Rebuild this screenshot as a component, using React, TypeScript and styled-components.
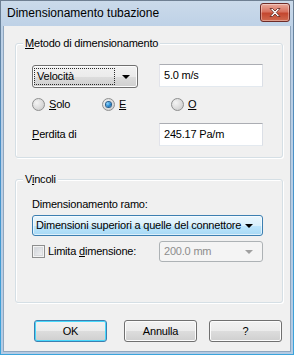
import React from 'react';
import styled, { createGlobalStyle } from 'styled-components';

const GlobalStyle = createGlobalStyle`
  html, body {
    margin: 0;
    padding: 0;
    background: #ffffff;
  }
  body {
    font-family: "Liberation Sans", Arial, sans-serif;
    font-size: 11px;
    line-height: 13px;
    color: #000;
  }
`;

const Frame = styled.div`
  width: 294px;
  height: 355px;
  box-sizing: border-box;
  border: 1px solid;
  border-image: linear-gradient(#6f7f92, #4a8fc6 40%, #3aa4dc) 1;
  background: linear-gradient(#cbdaea, #bcd0e6 30px, #b4cbe4);
  padding: 0 2px 2px 2px;
  display: flex;
  flex-direction: column;
`;

const TitleBar = styled.div`
  height: 25px;
  flex: none;
  display: flex;
  align-items: flex-start;
  padding-left: 4px;
  padding-right: 1px;
`;

const TitleText = styled.div`
  flex: 1;
  font-size: 12px;
  line-height: 25px;
`;

const CloseButton = styled.div`
  margin-top: 2px;
  width: 30px;
  height: 19px;
  box-sizing: border-box;
  border: 1px solid #6e2b27;
  border-radius: 3px;
  background: linear-gradient(#e9a99b, #d8725f 45%, #c4472f 55%, #d06a4f);
  box-shadow: inset 0 0 0 1px rgba(255, 255, 255, 0.35);
  display: flex;
  align-items: center;
  justify-content: center;
`;

const Client = styled.div`
  flex: 1;
  background: #f0f0f0;
  border: 1px solid #8fa6be;
  border-top: none;
  padding-top: 17px;
  padding-left: 11px;
`;

const Group = styled.div<{ gapTop?: number; padBottom: number }>`
  width: 268px;
  box-sizing: border-box;
  margin-top: ${p => p.gapTop ?? 0}px;
  border: 1px solid #d5dfe5;
  border-radius: 3px;
  box-shadow: inset 1px 1px 0 #ffffff, 1px 1px 0 #ffffff;
  padding: 0 19px ${p => p.padBottom}px 16px;
  display: flex;
  flex-direction: column;
`;

const Legend = styled.div`
  align-self: flex-start;
  margin-top: -7px;
  margin-left: -9px;
  padding: 0 2px;
  height: 13px;
  line-height: 13px;
  background: #f0f0f0;
  letter-spacing: -0.2px;
`;

const Row = styled.div<{ top: number; height: number; align?: string }>`
  display: flex;
  align-items: ${p => p.align ?? 'center'};
  justify-content: space-between;
  margin-top: ${p => p.top}px;
  height: ${p => p.height}px;
`;

const Label = styled.span`
  letter-spacing: -0.2px;
  white-space: nowrap;
`;

const TextField = styled.div`
  width: 104px;
  height: 23px;
  box-sizing: border-box;
  border: 1px solid;
  border-color: #abadb3 #dbdfe6 #e3e9ef #e2e3ea;
  background: #fff;
  padding: 0 4px;
  line-height: 20px;
  letter-spacing: -0.2px;
`;

const ClassicCombo = styled.div`
  width: 106px;
  height: 23px;
  margin-top: 1px;
  box-sizing: border-box;
  border: 1px solid #707070;
  border-radius: 3px;
  background: linear-gradient(#f2f2f2, #ebebeb 50%, #dddddd 50%, #cfcfcf);
  box-shadow: inset 0 0 0 1px #fcfcfc;
  display: flex;
  align-items: center;
  padding: 0 7px 0 1px;
`;

const FocusText = styled.div`
  flex: 1;
  height: 17px;
  line-height: 15px;
  box-sizing: border-box;
  border: 1px dotted #2a2a2a;
  padding-left: 2px;
  margin-right: 7px;
  letter-spacing: -0.2px;
`;

const Arrow = styled.div<{ disabled?: boolean }>`
  width: 0;
  height: 0;
  border-left: 4px solid transparent;
  border-right: 4px solid transparent;
  border-top: 4px solid ${p => (p.disabled ? '#a0a0a0' : '#000')};
`;

const BlueCombo = styled.div`
  height: 21px;
  box-sizing: border-box;
  border: 1px solid #3c7fb1;
  border-radius: 3px;
  background: linear-gradient(#eaf6fd, #d9f0fc 50%, #bee6fd 50%, #a7d9f5);
  box-shadow: inset 0 0 0 1px rgba(255, 255, 255, 0.6);
  display: flex;
  align-items: center;
  padding: 0 9px 0 3px;
  margin-top: 4px;
`;

const ComboText = styled.div<{ disabled?: boolean }>`
  flex: 1;
  letter-spacing: -0.2px;
  color: ${p => (p.disabled ? '#8d8d8d' : '#000')};
  white-space: nowrap;
`;

const DisabledCombo = styled.div`
  width: 104px;
  height: 21px;
  box-sizing: border-box;
  border: 1px solid #adb2b5;
  border-radius: 3px;
  background: #f4f4f4;
  display: flex;
  align-items: center;
  padding: 0 9px 0 4px;
`;

const RadioRow = styled.div`
  display: flex;
  align-items: center;
  margin-top: 10px;
  height: 13px;
`;

const RadioItem = styled.div<{ width?: number }>`
  display: flex;
  align-items: center;
  gap: 4px;
  width: ${p => (p.width ? `${p.width}px` : 'auto')};
`;

const RadioCircle = styled.div<{ checked?: boolean }>`
  width: 13px;
  height: 13px;
  box-sizing: border-box;
  border-radius: 50%;
  border: 1px solid #8e8f8f;
  background: radial-gradient(circle at 35% 35%, #f4f4f4, #d4d4d4 70%, #c6c6c6);
  display: flex;
  align-items: center;
  justify-content: center;
  &::after {
    content: '';
    display: ${p => (p.checked ? 'block' : 'none')};
    width: 5px;
    height: 5px;
    border-radius: 50%;
    background: radial-gradient(circle at 35% 35%, #8fd6ff, #1a7fc9 60%, #0d4f91);
    box-shadow: 0 0 0 1px #2b5f8c;
  }
`;

const CheckRow = styled.div`
  display: flex;
  align-items: center;
  gap: 3px;
`;

const CheckBox = styled.div`
  width: 13px;
  height: 13px;
  box-sizing: border-box;
  border: 1px solid #8e8f8f;
  background: linear-gradient(135deg, #cbcfd5, #f6f6f6);
  box-shadow: inset 0 0 0 1px #f4f4f4, inset 0 0 0 2px #d8dadd;
`;

const ButtonRow = styled.div`
  display: flex;
  margin-top: 17px;
  padding-left: 19px;
  gap: 12px;
`;

const Button = styled.div<{ primary?: boolean; extra?: number }>`
  width: 73px;
  height: 22px;
  box-sizing: border-box;
  margin-right: ${p => p.extra ?? 0}px;
  border: 1px solid ${p => (p.primary ? '#3c7fb1' : '#707070')};
  border-radius: 3px;
  background: linear-gradient(#f2f2f2, #ebebeb 50%, #dddddd 50%, #cfcfcf);
  box-shadow: inset 0 0 0 1px ${p => (p.primary ? '#48d8fb' : '#fcfcfc')};
  display: flex;
  align-items: center;
  justify-content: center;
  letter-spacing: -0.2px;
`;

const U = styled.span`
  text-decoration: underline;
  text-underline-offset: 1px;
`;

const CloseIcon = () => (
  <svg width="14" height="11" viewBox="0 0 14 11">
    <path
      d="M2 1.5 L4.5 1.5 L7 4 L9.5 1.5 L12 1.5 L8.3 5.5 L12 9.5 L9.5 9.5 L7 7 L4.5 9.5 L2 9.5 L5.7 5.5 Z"
      fill="#ffffff"
      stroke="#5a2420"
      strokeWidth="0.8"
      strokeLinejoin="round"
    />
  </svg>
);

export default function App() {
  return (
    <>
      <GlobalStyle />
      <Frame>
        <TitleBar>
          <TitleText>Dimensionamento tubazione</TitleText>
          <CloseButton>
            <CloseIcon />
          </CloseButton>
        </TitleBar>
        <Client>
          <Group padBottom={11}>
            <Legend>
              <U>M</U>etodo di dimensionamento
            </Legend>
            <Row top={14} height={24} align="flex-start">
              <ClassicCombo>
                <FocusText>Velocità</FocusText>
                <Arrow />
              </ClassicCombo>
              <TextField>5.0 m/s</TextField>
            </Row>
            <RadioRow>
              <RadioItem width={70}>
                <RadioCircle />
                <Label>
                  <U>S</U>olo
                </Label>
              </RadioItem>
              <RadioItem width={69}>
                <RadioCircle checked />
                <Label>
                  <U>E</U>
                </Label>
              </RadioItem>
              <RadioItem>
                <RadioCircle />
                <Label>
                  <U>O</U>
                </Label>
              </RadioItem>
            </RadioRow>
            <Row top={12} height={23}>
              <Label>
                <U>P</U>erdita di
              </Label>
              <TextField>245.17 Pa/m</TextField>
            </Row>
          </Group>
          <Group gapTop={21} padBottom={40}>
            <Legend>
              V<U>i</U>ncoli
            </Legend>
            <Row top={12} height={13}>
              <Label>Dimensionamento ramo:</Label>
            </Row>
            <BlueCombo>
              <ComboText>Dimensioni superiori a quelle del connettore</ComboText>
              <Arrow />
            </BlueCombo>
            <Row top={5} height={21}>
              <CheckRow>
                <CheckBox />
                <Label>
                  Limita <U>d</U>imensione:
                </Label>
              </CheckRow>
              <DisabledCombo>
                <ComboText disabled>200.0 mm</ComboText>
                <Arrow disabled />
              </DisabledCombo>
            </Row>
          </Group>
          <ButtonRow>
            <Button primary extra={5}>OK</Button>
            <Button>Annulla</Button>
            <Button>?</Button>
          </ButtonRow>
        </Client>
      </Frame>
    </>
  );
}
